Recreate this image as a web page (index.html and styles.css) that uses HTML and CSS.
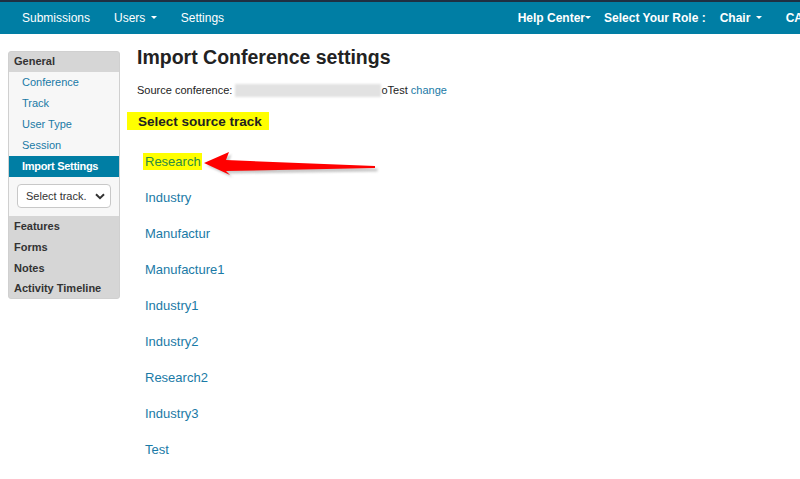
FILE: index.html
```html
<!DOCTYPE html>
<html>
<head>
<meta charset="utf-8">
<link rel="stylesheet" href="styles.css">
</head>
<body>
<nav class="topnav">
  <div class="nav-left">
    <a class="nav-item">Submissions</a>
    <a class="nav-item">Users <span class="caret"></span></a>
    <a class="nav-item">Settings</a>
  </div>
  <div class="nav-right">
    <a class="nav-item bold">Help Center<span class="caret tight"></span></a>
    <span class="nav-item bold">Select Your Role :</span>
    <a class="nav-item bold">Chair <span class="caret"></span></a>
    <a class="nav-item bold">CA</a>
  </div>
</nav>
<div class="page">
  <aside class="sidebar">
    <div class="side-head">General</div>
    <div class="side-group">
      <a class="side-link">Conference</a>
      <a class="side-link">Track</a>
      <a class="side-link">User Type</a>
      <a class="side-link">Session</a>
      <a class="side-link active">Import Settings</a>
      <div class="select-wrap">
        <div class="select">
          <span>Select track.</span>
          <svg width="10" height="7" viewBox="0 0 10 7"><path d="M1 1.2 L5 5.2 L9 1.2" fill="none" stroke="#333" stroke-width="2"/></svg>
        </div>
      </div>
    </div>
    <div class="side-head small">Features</div>
    <div class="side-head small">Forms</div>
    <div class="side-head small">Notes</div>
    <div class="side-head small last">Activity Timeline</div>
  </aside>
  <main class="main">
    <h1 class="title">Import Conference settings</h1>
    <p class="source">Source conference: <span class="blur"></span>oTest <a class="link">change</a></p>
    <h2 class="subtitle">Select source track</h2>
    <ul class="tracks">
      <li class="track-row"><a class="track hl">Research</a>
        <svg class="arrow" width="180" height="30" viewBox="0 0 180 30">
          <defs><filter id="sh" x="-10%" y="-30%" width="120%" height="160%"><feGaussianBlur stdDeviation="1"/></filter></defs>
          <path d="M2 12 L27 1 L24 9 L173 15 L173 18 L24 20 L28 24 Z" fill="#888" opacity="0.45" filter="url(#sh)" transform="translate(1.5,1.5)"/>
          <path d="M1 11 L26 0 L23 8 L172 14 L172 16 L23 19 L27 23 Z" fill="#ff0000"/>
        </svg>
      </li>
      <li class="track-row"><a class="track">Industry</a></li>
      <li class="track-row"><a class="track">Manufactur</a></li>
      <li class="track-row"><a class="track">Manufacture1</a></li>
      <li class="track-row"><a class="track">Industry1</a></li>
      <li class="track-row"><a class="track">Industry2</a></li>
      <li class="track-row"><a class="track">Research2</a></li>
      <li class="track-row"><a class="track">Industry3</a></li>
      <li class="track-row"><a class="track">Test</a></li>
    </ul>
  </main>
</div>
</body>
</html>
```

FILE: styles.css
```css
html, body {
  margin: 0;
  padding: 0;
  background: #ffffff;
  font-family: "Liberation Sans", Arial, sans-serif;
  color: #333333;
  overflow: hidden;
}
.topnav {
  height: 32px;
  border-top: 2px solid #1f2f42;
  background: #007ea4;
  display: flex;
  justify-content: space-between;
  align-items: center;
  color: #ffffff;
  font-size: 12px;
  white-space: nowrap;
}
.nav-left {
  display: flex;
  gap: 24px;
  padding-left: 22px;
}
.nav-right {
  display: flex;
  align-items: center;
  margin-right: -3px;
}
.nav-right .nav-item { margin-left: 13px; }
.nav-right .nav-item:nth-child(3) { margin-left: 14px; }
.nav-right .nav-item:nth-child(4) { margin-left: 24px; }
.nav-item { color: #ffffff; text-decoration: none; }
.bold { font-weight: bold; }
.caret {
  display: inline-block;
  width: 0;
  height: 0;
  border-left: 3.5px solid transparent;
  border-right: 3.5px solid transparent;
  border-top: 3.5px solid #ffffff;
  vertical-align: middle;
  margin-left: 2px;
  margin-top: -2px;
}
.caret.tight { margin-left: 0; }
.page {
  display: flex;
  align-items: flex-start;
  padding-left: 8px;
}
.sidebar {
  width: 110px;
  margin-top: 17px;
  border: 1px solid #d0d0d0;
  border-radius: 3px;
  background: #d6d6d6;
  font-size: 11px;
  overflow: hidden;
}
.side-head {
  font-weight: bold;
  color: #333333;
  padding: 0 5px;
  height: 20px;
  line-height: 19px;
}
.side-head.small { height: 21px; line-height: 21px; }
.side-head.last { height: 19px; line-height: 19px; }
.side-group {
  background: #f7f7f7;
}
.side-link {
  display: block;
  color: #1a7aa6;
  padding-left: 13px;
  height: 21px;
  line-height: 21px;
}
.side-link.active {
  background: #007ea4;
  color: #ffffff;
  font-weight: bold;
  letter-spacing: -0.3px;
}
.select-wrap {
  padding: 7px 8px 8px 8px;
}
.select {
  height: 22px;
  border: 1px solid #c8c8c8;
  border-radius: 4px;
  background: #ffffff;
  display: flex;
  align-items: center;
  justify-content: space-between;
  padding: 0 5px 0 8px;
  color: #333;
  font-size: 11px;
}
.main {
  padding-left: 17px;
  flex: 1;
}
.title {
  margin: 11px 0 0 0;
  font-size: 19.5px;
  font-weight: bold;
  color: #222222;
  line-height: 24px;
}
.source {
  margin: 14px 0 0 0;
  font-size: 11px;
  line-height: 14px;
  color: #222;
  display: flex;
  align-items: center;
  white-space: pre;
}
.blur {
  display: inline-block;
  width: 146px;
  height: 13px;
  background: #e2e2e2;
  filter: blur(1px);
}
.link { color: #1a7aa6; }
.subtitle {
  margin: 15px 0 0 -10px;
  display: inline-block;
  background: #ffff00;
  font-size: 13.5px;
  font-weight: bold;
  color: #222222;
  padding: 0 7px 0 11px;
  height: 18px;
  line-height: 20px;
}
.tracks {
  list-style: none;
  margin: 13px 0 0 0;
  padding: 0 0 0 8px;
}
.track-row {
  height: 36px;
  display: flex;
  align-items: center;
  position: relative;
}
.track {
  color: #1a7aa6;
  font-size: 13px;
}
.track.hl {
  background: #ffff00;
  color: #2e8a45;
  padding: 1px 1px 1px 2px;
  margin-left: -2px;
}
.arrow {
  position: absolute;
  left: 58px;
  top: 9px;
}
```
